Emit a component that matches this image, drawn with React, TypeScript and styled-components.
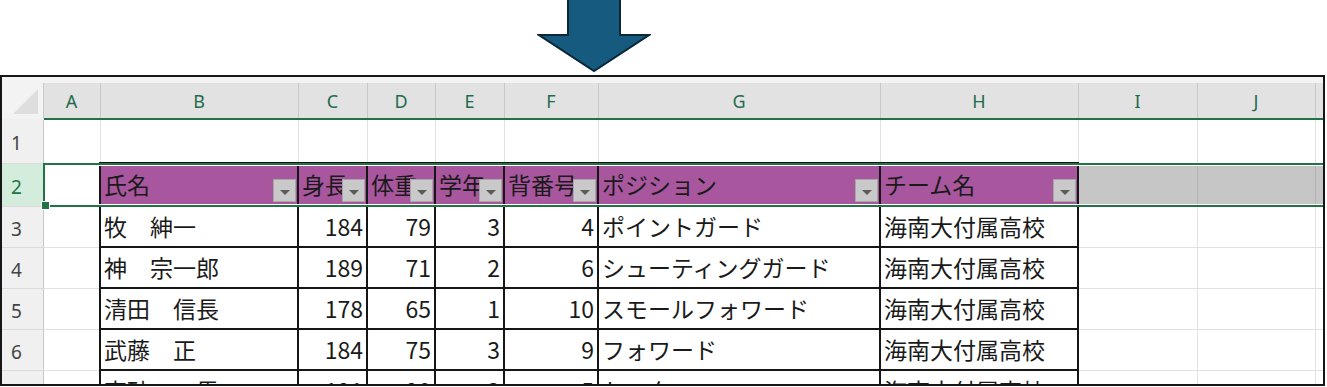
import React from 'react';
import styled, { createGlobalStyle, css } from 'styled-components';

const GREEN = '#217346';
const PURPLE = '#a8579e';
const GRID = '#e1e1e1';
const INK = '#161616';

const GlobalStyle = createGlobalStyle`
  html, body {
    margin: 0;
    padding: 0;
    background: #ffffff;
  }
  body {
    font-family: "Noto Sans CJK JP", "Noto Sans", sans-serif;
    overflow: hidden;
  }
`;

const Page = styled.div`
  width: 1327px;
  height: 387px;
  display: flex;
  flex-direction: column;
`;

const ArrowBar = styled.div`
  height: 75px;
  flex-shrink: 0;
  padding-left: 537px;
`;

const SheetFrame = styled.div`
  position: relative;
  width: 1325px;
  height: 311px;
  box-sizing: border-box;
  border: 2px solid ${INK};
  background: #f3f3f3;
  padding-top: 6px;
  overflow: hidden;
`;

const Grid = styled.table<{ $width: number }>`
  border-collapse: collapse;
  table-layout: fixed;
  width: ${(p) => p.$width}px;
`;

const Row = styled.tr<{ $h: number }>`
  height: ${(p) => p.$h}px;
`;

const Corner = styled.th`
  position: relative;
  padding: 0;
  background: #f3f3f3;
  border-right: 1px solid #c8c8c8;
  border-bottom: 2px solid transparent;
`;

const CornerMark = styled.span`
  position: absolute;
  right: 5px;
  bottom: 4px;
  width: 0;
  height: 0;
  border-left: 25px solid transparent;
  border-bottom: 25px solid #dedede;
`;

const ColHead = styled.th`
  padding: 0;
  background: #e2e2e2;
  border-right: 1px solid #c8c8c8;
  border-bottom: 2px solid ${GREEN};
  color: #1f6b4c;
  font-family: "Noto Sans", "Noto Sans CJK JP", sans-serif;
  font-size: 18px;
  font-weight: 400;
  text-align: center;
  vertical-align: middle;
`;

const RowHead = styled.th<{ $active?: boolean }>`
  padding: 4px 0 0 9px;
  background: ${(p) => (p.$active ? '#d3ecdc' : '#f0f0f0')};
  border-right: 1px solid #c8c8c8;
  border-bottom: 1px solid #dadada;
  color: ${(p) => (p.$active ? GREEN : '#444444')};
  font-family: "Noto Sans", "Noto Sans CJK JP", sans-serif;
  font-size: 19px;
  font-weight: 400;
  text-align: left;
  vertical-align: middle;
`;

type Kind = 'grid' | 'title' | 'data' | 'dim' | 'active';

const kindStyles: Record<Kind, ReturnType<typeof css>> = {
  grid: css`
    background: #ffffff;
    border: 1px solid ${GRID};
  `,
  active: css`
    background: #ffffff;
    border: 1px solid ${GRID};
  `,
  dim: css`
    background: #c6c6c6;
    border: 1px solid #b3b3b3;
  `,
  title: css`
    position: relative;
    background: ${PURPLE};
    border: 2px solid ${INK};
  `,
  data: css`
    background: #ffffff;
    border: 2px solid ${INK};
  `,
};

const Cell = styled.td<{ $kind: Kind; $num?: boolean }>`
  padding: 0 ${(p) => (p.$num ? '3px' : '2px')} 0 ${(p) => (p.$num ? '2px' : '3px')};
  overflow: hidden;
  white-space: nowrap;
  color: #1a1a1a;
  font-size: 23px;
  line-height: 1;
  text-align: ${(p) => (p.$num ? 'right' : 'left')};
  vertical-align: middle;
  ${(p) => kindStyles[p.$kind]}
`;

const FilterButton = styled.span`
  position: absolute;
  right: 1px;
  bottom: 3px;
  width: 23px;
  height: 23px;
  box-sizing: border-box;
  background: #c9c9c9;
  border: 1px solid #a6a6a6;
  display: flex;
  align-items: center;
  justify-content: center;

  &::after {
    content: '';
    margin-top: 3px;
    border-left: 5px solid transparent;
    border-right: 5px solid transparent;
    border-top: 5px solid #5a5a5a;
  }
`;

const SelectionBox = styled.div`
  position: absolute;
  left: 41px;
  top: 86px;
  right: -10px;
  height: 44px;
  box-sizing: border-box;
  border: 2px solid ${GREEN};
  box-shadow: inset 0 0 0 1px #ffffff;
  pointer-events: none;
`;

const FillHandle = styled.span`
  position: absolute;
  left: -4px;
  bottom: -5px;
  width: 7px;
  height: 7px;
  background: ${GREEN};
  border: 1px solid #ffffff;
`;

// last column has no label: it sits past the right edge of the frame
const columns = [
  { key: 'A', w: 57 },
  { key: 'B', w: 198 },
  { key: 'C', w: 69 },
  { key: 'D', w: 68 },
  { key: 'E', w: 69 },
  { key: 'F', w: 94 },
  { key: 'G', w: 282 },
  { key: 'H', w: 198 },
  { key: 'I', w: 119 },
  { key: 'J', w: 118 },
  { key: '', w: 20 },
];

const ROW_HEAD_W = 41;

const titles = ['氏名', '身長', '体重', '学年', '背番号', 'ポジション', 'チーム名'];

const players = [
  ['牧　紳一', 184, 79, 3, 4, 'ポイントガード', '海南大付属高校'],
  ['神　宗一郎', 189, 71, 2, 6, 'シューティングガード', '海南大付属高校'],
  ['清田　信長', 178, 65, 1, 10, 'スモールフォワード', '海南大付属高校'],
  ['武藤　正', 184, 75, 3, 9, 'フォワード', '海南大付属高校'],
  ['高砂　一馬', 191, 90, 2, 5, 'センター', '海南大付属高校'],
];

const DownArrow = () => (
  <svg width="114" height="74" viewBox="0 0 114 74">
    <path
      d="M31 -2 L83 -2 L83 35 L112 35 L57 71 L2 35 L31 35 Z"
      fill="#165b7f"
      stroke="#0b2838"
      strokeWidth="2"
      strokeLinejoin="miter"
    />
  </svg>
);

const App = () => {
  const tableWidth = ROW_HEAD_W + columns.reduce((sum, c) => sum + c.w, 0);
  const trailing = columns.slice(8);

  return (
    <Page>
      <GlobalStyle />
      <ArrowBar>
        <DownArrow />
      </ArrowBar>
      <SheetFrame>
        <Grid $width={tableWidth}>
          <colgroup>
            <col style={{ width: ROW_HEAD_W }} />
            {columns.map((c, i) => (
              <col key={i} style={{ width: c.w }} />
            ))}
          </colgroup>
          <tbody>
            <Row $h={36}>
              <Corner>
                <CornerMark />
              </Corner>
              {columns.map((c, i) => (
                <ColHead key={i}>{c.key}</ColHead>
              ))}
            </Row>
            <Row $h={44}>
              <RowHead>1</RowHead>
              {columns.map((c, i) => (
                <Cell key={i} $kind="grid" />
              ))}
            </Row>
            <Row $h={43}>
              <RowHead $active>2</RowHead>
              <Cell $kind="active" />
              {titles.map((t) => (
                <Cell key={t} $kind="title">
                  {t}
                  <FilterButton />
                </Cell>
              ))}
              {trailing.map((c, i) => (
                <Cell key={i} $kind="dim" />
              ))}
            </Row>
            {players.map((p, i) => (
              <Row key={i} $h={41}>
                <RowHead>{i + 3}</RowHead>
                <Cell $kind="grid" />
                {p.map((v, j) => (
                  <Cell key={j} $kind="data" $num={typeof v === 'number'}>
                    {v}
                  </Cell>
                ))}
                {trailing.map((c, k) => (
                  <Cell key={k} $kind="grid" />
                ))}
              </Row>
            ))}
          </tbody>
        </Grid>
        <SelectionBox>
          <FillHandle />
        </SelectionBox>
      </SheetFrame>
    </Page>
  );
};

export default App;
